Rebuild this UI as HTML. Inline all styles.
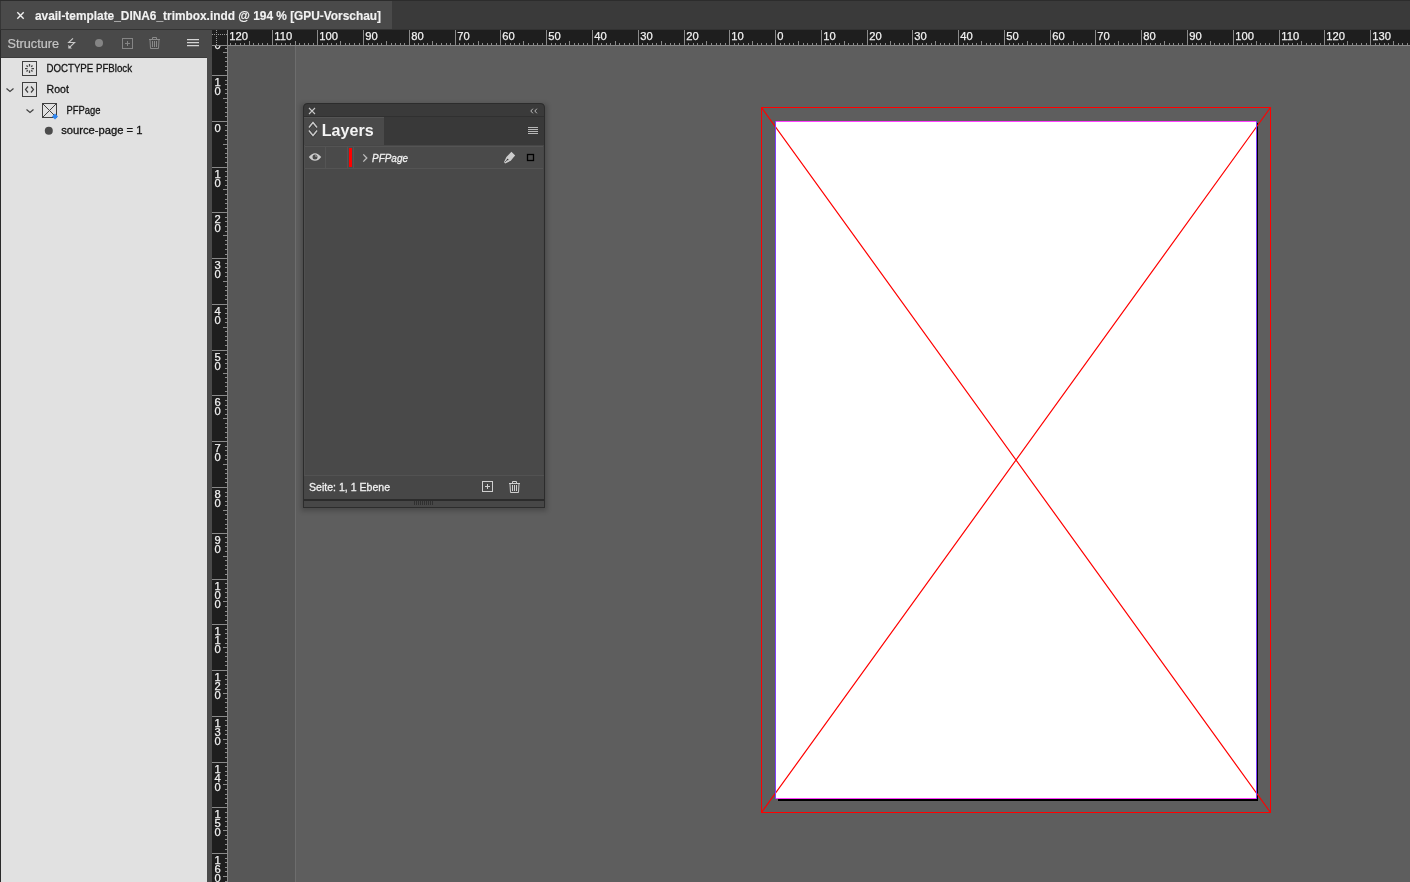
<!DOCTYPE html>
<html><head><meta charset="utf-8"><style>html,body{margin:0;padding:0;width:1410px;height:882px;overflow:hidden;background:#5e5e5e}
text{font-family:"Liberation Sans",sans-serif}</style></head>
<body><svg width="1410" height="882" viewBox="0 0 1410 882" style="display:block;will-change:transform" font-family="Liberation Sans, sans-serif">
<defs><filter id="shadow" x="-10%" y="-10%" width="120%" height="120%"><feGaussianBlur stdDeviation="2.5"/></filter><clipPath id="vclip"><rect x="212" y="46" width="16" height="836"/></clipPath></defs>
<rect x="0" y="0" width="1410" height="882" fill="#5e5e5e" />
<rect x="228" y="46" width="67" height="836" fill="#575757" />
<rect x="295" y="46" width="1" height="836" fill="#6d6d6d" />
<rect x="0" y="0" width="1410" height="29" fill="#3a3a3a" />
<rect x="0" y="0" width="1410" height="1" fill="#2c2c2c" />
<rect x="0" y="1" width="392" height="28" fill="#4a4a4a" />
<rect x="0" y="29" width="1410" height="1" fill="#323232" />
<rect x="0" y="1" width="1" height="28" fill="#363636" />
<path d="M17.3 12.3 L23.7 18.7 M23.7 12.3 L17.3 18.7" stroke="#f0f0f0" stroke-width="1.4" fill="none"/>
<text x="35" y="19.6" font-size="12.2" fill="#f2f2f2" font-weight="bold" font-style="normal" textLength="346" lengthAdjust="spacingAndGlyphs" stroke="#f2f2f2" stroke-width="0.15">avail-template_DINA6_trimbox.indd @ 194 % [GPU-Vorschau]</text>
<rect x="0" y="30" width="212" height="852" fill="#4a4a4a" />
<rect x="0" y="30" width="212" height="27" fill="#494949" />
<rect x="0" y="57" width="207" height="1" fill="#3c3c3c" />
<rect x="1" y="58" width="206" height="824" fill="#e1e1e1" />
<rect x="0" y="30" width="1" height="852" fill="#2a2a2a" />
<text x="7.5" y="47.6" font-size="12" fill="#c4c4c4" font-weight="normal" font-style="normal" textLength="51.5" lengthAdjust="spacingAndGlyphs"  stroke="#c4c4c4" stroke-width="0.2">Structure</text>
<path d="M73 38.3 L68.6 42.5 H74.6 L69.8 47.2" stroke="#c8c8c8" stroke-width="1.1" fill="none"/>
<path d="M68.3 48.4 L68.3 44.8 L71.9 48.4 Z" fill="#c8c8c8"/>
<circle cx="99" cy="43" r="4" fill="#858585"/>
<rect x="122.5" y="38.5" width="10" height="10" stroke="#858585" fill="none" stroke-width="1"/>
<path d="M127.5 41 V46 M125 43.5 H130" stroke="#858585" stroke-width="1"/>
<path d="M149 39.5 H160 M150 39.5 L150.5 48.5 H158.5 L159 39.5 M152.5 39.3 V37.5 H156.5 V39.3 M152.5 41 V47 M154.5 41 V47 M156.5 41 V47" stroke="#8a8a8a" stroke-width="1" fill="none"/>
<path d="M187 39.5 H199 M187 42.5 H199 M187 45.5 H199" stroke="#d4d4d4" stroke-width="1.25" fill="none"/>
<rect x="22.5" y="61.5" width="14" height="14" stroke="#404040" fill="none"/>
<path d="M29.5 64 V66.5 M29.5 70.5 V73 M25 68.5 H27.5 M31.5 68.5 H34 M26.5 65.5 L27.8 66.8 M32.5 65.5 L31.2 66.8 M26.5 71.5 L27.8 70.2 M32.5 71.5 L31.2 70.2" stroke="#404040" stroke-width="1.25" fill="none"/>
<text x="46.5" y="72" font-size="11" fill="#141414" font-weight="normal" font-style="normal" textLength="85.5" lengthAdjust="spacingAndGlyphs"  stroke="#141414" stroke-width="0.3">DOCTYPE PFBlock</text>
<path d="M6.5 88.5 L10 91.5 L13.5 88.5" stroke="#404040" stroke-width="1.2" fill="none"/>
<rect x="22.5" y="82.5" width="14" height="14" stroke="#404040" fill="none"/>
<path d="M28 86.5 L25.5 89.5 L28 92.5 M31 86.5 L33.5 89.5 L31 92.5" stroke="#404040" stroke-width="1.2" fill="none"/>
<text x="46.6" y="93" font-size="11" fill="#141414" font-weight="normal" font-style="normal" textLength="22.3" lengthAdjust="spacingAndGlyphs"  stroke="#141414" stroke-width="0.3">Root</text>
<path d="M26.5 109.5 L30 112.5 L33.5 109.5" stroke="#404040" stroke-width="1.2" fill="none"/>
<rect x="42.5" y="103.5" width="14" height="14" stroke="#404040" fill="none"/>
<path d="M42.5 103.5 L56.5 117.5 M56.5 103.5 L42.5 117.5" stroke="#404040" stroke-width="1" fill="none"/>
<path d="M55 113.5 L58 116.5 L55 119.5 L52 116.5 Z" fill="#2f86f0"/>
<text x="66.5" y="114" font-size="11" fill="#141414" font-weight="normal" font-style="normal" textLength="34" lengthAdjust="spacingAndGlyphs"  stroke="#141414" stroke-width="0.3">PFPage</text>
<circle cx="48.8" cy="130.8" r="4" fill="#4c4c4c"/>
<text x="61.2" y="134" font-size="11" fill="#141414" font-weight="normal" font-style="normal" textLength="81.3" lengthAdjust="spacingAndGlyphs"  stroke="#141414" stroke-width="0.3">source-page = 1</text>
<rect x="212" y="30" width="1198" height="16" fill="#1e1e1e" />
<rect x="212" y="30" width="16" height="852" fill="#1e1e1e" />
<rect x="212" y="45" width="1198" height="1" fill="#8a8a8a" />
<rect x="227" y="30" width="1" height="852" fill="#8a8a8a" />
<rect x="216" y="30" width="1" height="1" fill="#9a9a9a" />
<rect x="216" y="32" width="1" height="1" fill="#9a9a9a" />
<rect x="216" y="34" width="1" height="1" fill="#9a9a9a" />
<rect x="216" y="36" width="1" height="1" fill="#9a9a9a" />
<rect x="216" y="38" width="1" height="1" fill="#9a9a9a" />
<rect x="216" y="40" width="1" height="1" fill="#9a9a9a" />
<rect x="216" y="42" width="1" height="1" fill="#9a9a9a" />
<rect x="216" y="44" width="1" height="1" fill="#9a9a9a" />
<rect x="212" y="34" width="1" height="1" fill="#9a9a9a" />
<rect x="214" y="34" width="1" height="1" fill="#9a9a9a" />
<rect x="216" y="34" width="1" height="1" fill="#9a9a9a" />
<rect x="218" y="34" width="1" height="1" fill="#9a9a9a" />
<rect x="220" y="34" width="1" height="1" fill="#9a9a9a" />
<rect x="222" y="34" width="1" height="1" fill="#9a9a9a" />
<rect x="224" y="34" width="1" height="1" fill="#9a9a9a" />
<rect x="226" y="34" width="1" height="1" fill="#9a9a9a" />
<rect x="227" y="30" width="1" height="15" fill="#8a8a8a" />
<text x="229.3" y="40.3" font-size="11.2" fill="#f0f0f0" stroke="#f0f0f0" stroke-width="0.25">120</text>
<rect x="230" y="43" width="1" height="2" fill="#8a8a8a" />
<rect x="235" y="43" width="1" height="2" fill="#8a8a8a" />
<rect x="240" y="43" width="1" height="2" fill="#8a8a8a" />
<rect x="244" y="43" width="1" height="2" fill="#8a8a8a" />
<rect x="249" y="41" width="1" height="4" fill="#8a8a8a" />
<rect x="253" y="43" width="1" height="2" fill="#8a8a8a" />
<rect x="258" y="43" width="1" height="2" fill="#8a8a8a" />
<rect x="262" y="43" width="1" height="2" fill="#8a8a8a" />
<rect x="267" y="43" width="1" height="2" fill="#8a8a8a" />
<rect x="272" y="30" width="1" height="15" fill="#8a8a8a" />
<text x="274.3" y="40.3" font-size="11.2" fill="#f0f0f0" stroke="#f0f0f0" stroke-width="0.25">110</text>
<rect x="276" y="43" width="1" height="2" fill="#8a8a8a" />
<rect x="281" y="43" width="1" height="2" fill="#8a8a8a" />
<rect x="285" y="43" width="1" height="2" fill="#8a8a8a" />
<rect x="290" y="43" width="1" height="2" fill="#8a8a8a" />
<rect x="295" y="41" width="1" height="4" fill="#8a8a8a" />
<rect x="299" y="43" width="1" height="2" fill="#8a8a8a" />
<rect x="304" y="43" width="1" height="2" fill="#8a8a8a" />
<rect x="308" y="43" width="1" height="2" fill="#8a8a8a" />
<rect x="313" y="43" width="1" height="2" fill="#8a8a8a" />
<rect x="317" y="30" width="1" height="15" fill="#8a8a8a" />
<text x="319.3" y="40.3" font-size="11.2" fill="#f0f0f0" stroke="#f0f0f0" stroke-width="0.25">100</text>
<rect x="322" y="43" width="1" height="2" fill="#8a8a8a" />
<rect x="327" y="43" width="1" height="2" fill="#8a8a8a" />
<rect x="331" y="43" width="1" height="2" fill="#8a8a8a" />
<rect x="336" y="43" width="1" height="2" fill="#8a8a8a" />
<rect x="340" y="41" width="1" height="4" fill="#8a8a8a" />
<rect x="345" y="43" width="1" height="2" fill="#8a8a8a" />
<rect x="349" y="43" width="1" height="2" fill="#8a8a8a" />
<rect x="354" y="43" width="1" height="2" fill="#8a8a8a" />
<rect x="359" y="43" width="1" height="2" fill="#8a8a8a" />
<rect x="363" y="30" width="1" height="15" fill="#8a8a8a" />
<text x="365.3" y="40.3" font-size="11.2" fill="#f0f0f0" stroke="#f0f0f0" stroke-width="0.25">90</text>
<rect x="368" y="43" width="1" height="2" fill="#8a8a8a" />
<rect x="372" y="43" width="1" height="2" fill="#8a8a8a" />
<rect x="377" y="43" width="1" height="2" fill="#8a8a8a" />
<rect x="381" y="43" width="1" height="2" fill="#8a8a8a" />
<rect x="386" y="41" width="1" height="4" fill="#8a8a8a" />
<rect x="391" y="43" width="1" height="2" fill="#8a8a8a" />
<rect x="395" y="43" width="1" height="2" fill="#8a8a8a" />
<rect x="400" y="43" width="1" height="2" fill="#8a8a8a" />
<rect x="404" y="43" width="1" height="2" fill="#8a8a8a" />
<rect x="409" y="30" width="1" height="15" fill="#8a8a8a" />
<text x="411.3" y="40.3" font-size="11.2" fill="#f0f0f0" stroke="#f0f0f0" stroke-width="0.25">80</text>
<rect x="414" y="43" width="1" height="2" fill="#8a8a8a" />
<rect x="418" y="43" width="1" height="2" fill="#8a8a8a" />
<rect x="423" y="43" width="1" height="2" fill="#8a8a8a" />
<rect x="427" y="43" width="1" height="2" fill="#8a8a8a" />
<rect x="432" y="41" width="1" height="4" fill="#8a8a8a" />
<rect x="436" y="43" width="1" height="2" fill="#8a8a8a" />
<rect x="441" y="43" width="1" height="2" fill="#8a8a8a" />
<rect x="446" y="43" width="1" height="2" fill="#8a8a8a" />
<rect x="450" y="43" width="1" height="2" fill="#8a8a8a" />
<rect x="455" y="30" width="1" height="15" fill="#8a8a8a" />
<text x="457.3" y="40.3" font-size="11.2" fill="#f0f0f0" stroke="#f0f0f0" stroke-width="0.25">70</text>
<rect x="459" y="43" width="1" height="2" fill="#8a8a8a" />
<rect x="464" y="43" width="1" height="2" fill="#8a8a8a" />
<rect x="468" y="43" width="1" height="2" fill="#8a8a8a" />
<rect x="473" y="43" width="1" height="2" fill="#8a8a8a" />
<rect x="478" y="41" width="1" height="4" fill="#8a8a8a" />
<rect x="482" y="43" width="1" height="2" fill="#8a8a8a" />
<rect x="487" y="43" width="1" height="2" fill="#8a8a8a" />
<rect x="491" y="43" width="1" height="2" fill="#8a8a8a" />
<rect x="496" y="43" width="1" height="2" fill="#8a8a8a" />
<rect x="500" y="30" width="1" height="15" fill="#8a8a8a" />
<text x="502.3" y="40.3" font-size="11.2" fill="#f0f0f0" stroke="#f0f0f0" stroke-width="0.25">60</text>
<rect x="505" y="43" width="1" height="2" fill="#8a8a8a" />
<rect x="510" y="43" width="1" height="2" fill="#8a8a8a" />
<rect x="514" y="43" width="1" height="2" fill="#8a8a8a" />
<rect x="519" y="43" width="1" height="2" fill="#8a8a8a" />
<rect x="523" y="41" width="1" height="4" fill="#8a8a8a" />
<rect x="528" y="43" width="1" height="2" fill="#8a8a8a" />
<rect x="533" y="43" width="1" height="2" fill="#8a8a8a" />
<rect x="537" y="43" width="1" height="2" fill="#8a8a8a" />
<rect x="542" y="43" width="1" height="2" fill="#8a8a8a" />
<rect x="546" y="30" width="1" height="15" fill="#8a8a8a" />
<text x="548.3" y="40.3" font-size="11.2" fill="#f0f0f0" stroke="#f0f0f0" stroke-width="0.25">50</text>
<rect x="551" y="43" width="1" height="2" fill="#8a8a8a" />
<rect x="555" y="43" width="1" height="2" fill="#8a8a8a" />
<rect x="560" y="43" width="1" height="2" fill="#8a8a8a" />
<rect x="565" y="43" width="1" height="2" fill="#8a8a8a" />
<rect x="569" y="41" width="1" height="4" fill="#8a8a8a" />
<rect x="574" y="43" width="1" height="2" fill="#8a8a8a" />
<rect x="578" y="43" width="1" height="2" fill="#8a8a8a" />
<rect x="583" y="43" width="1" height="2" fill="#8a8a8a" />
<rect x="587" y="43" width="1" height="2" fill="#8a8a8a" />
<rect x="592" y="30" width="1" height="15" fill="#8a8a8a" />
<text x="594.3" y="40.3" font-size="11.2" fill="#f0f0f0" stroke="#f0f0f0" stroke-width="0.25">40</text>
<rect x="597" y="43" width="1" height="2" fill="#8a8a8a" />
<rect x="601" y="43" width="1" height="2" fill="#8a8a8a" />
<rect x="606" y="43" width="1" height="2" fill="#8a8a8a" />
<rect x="610" y="43" width="1" height="2" fill="#8a8a8a" />
<rect x="615" y="41" width="1" height="4" fill="#8a8a8a" />
<rect x="619" y="43" width="1" height="2" fill="#8a8a8a" />
<rect x="624" y="43" width="1" height="2" fill="#8a8a8a" />
<rect x="629" y="43" width="1" height="2" fill="#8a8a8a" />
<rect x="633" y="43" width="1" height="2" fill="#8a8a8a" />
<rect x="638" y="30" width="1" height="15" fill="#8a8a8a" />
<text x="640.3" y="40.3" font-size="11.2" fill="#f0f0f0" stroke="#f0f0f0" stroke-width="0.25">30</text>
<rect x="642" y="43" width="1" height="2" fill="#8a8a8a" />
<rect x="647" y="43" width="1" height="2" fill="#8a8a8a" />
<rect x="652" y="43" width="1" height="2" fill="#8a8a8a" />
<rect x="656" y="43" width="1" height="2" fill="#8a8a8a" />
<rect x="661" y="41" width="1" height="4" fill="#8a8a8a" />
<rect x="665" y="43" width="1" height="2" fill="#8a8a8a" />
<rect x="670" y="43" width="1" height="2" fill="#8a8a8a" />
<rect x="674" y="43" width="1" height="2" fill="#8a8a8a" />
<rect x="679" y="43" width="1" height="2" fill="#8a8a8a" />
<rect x="684" y="30" width="1" height="15" fill="#8a8a8a" />
<text x="686.3" y="40.3" font-size="11.2" fill="#f0f0f0" stroke="#f0f0f0" stroke-width="0.25">20</text>
<rect x="688" y="43" width="1" height="2" fill="#8a8a8a" />
<rect x="693" y="43" width="1" height="2" fill="#8a8a8a" />
<rect x="697" y="43" width="1" height="2" fill="#8a8a8a" />
<rect x="702" y="43" width="1" height="2" fill="#8a8a8a" />
<rect x="706" y="41" width="1" height="4" fill="#8a8a8a" />
<rect x="711" y="43" width="1" height="2" fill="#8a8a8a" />
<rect x="716" y="43" width="1" height="2" fill="#8a8a8a" />
<rect x="720" y="43" width="1" height="2" fill="#8a8a8a" />
<rect x="725" y="43" width="1" height="2" fill="#8a8a8a" />
<rect x="729" y="30" width="1" height="15" fill="#8a8a8a" />
<text x="731.3" y="40.3" font-size="11.2" fill="#f0f0f0" stroke="#f0f0f0" stroke-width="0.25">10</text>
<rect x="734" y="43" width="1" height="2" fill="#8a8a8a" />
<rect x="738" y="43" width="1" height="2" fill="#8a8a8a" />
<rect x="743" y="43" width="1" height="2" fill="#8a8a8a" />
<rect x="748" y="43" width="1" height="2" fill="#8a8a8a" />
<rect x="752" y="41" width="1" height="4" fill="#8a8a8a" />
<rect x="757" y="43" width="1" height="2" fill="#8a8a8a" />
<rect x="761" y="43" width="1" height="2" fill="#8a8a8a" />
<rect x="766" y="43" width="1" height="2" fill="#8a8a8a" />
<rect x="771" y="43" width="1" height="2" fill="#8a8a8a" />
<rect x="775" y="30" width="1" height="15" fill="#8a8a8a" />
<text x="777.3" y="40.3" font-size="11.2" fill="#f0f0f0" stroke="#f0f0f0" stroke-width="0.25">0</text>
<rect x="780" y="43" width="1" height="2" fill="#8a8a8a" />
<rect x="784" y="43" width="1" height="2" fill="#8a8a8a" />
<rect x="789" y="43" width="1" height="2" fill="#8a8a8a" />
<rect x="793" y="43" width="1" height="2" fill="#8a8a8a" />
<rect x="798" y="41" width="1" height="4" fill="#8a8a8a" />
<rect x="803" y="43" width="1" height="2" fill="#8a8a8a" />
<rect x="807" y="43" width="1" height="2" fill="#8a8a8a" />
<rect x="812" y="43" width="1" height="2" fill="#8a8a8a" />
<rect x="816" y="43" width="1" height="2" fill="#8a8a8a" />
<rect x="821" y="30" width="1" height="15" fill="#8a8a8a" />
<text x="823.3" y="40.3" font-size="11.2" fill="#f0f0f0" stroke="#f0f0f0" stroke-width="0.25">10</text>
<rect x="825" y="43" width="1" height="2" fill="#8a8a8a" />
<rect x="830" y="43" width="1" height="2" fill="#8a8a8a" />
<rect x="835" y="43" width="1" height="2" fill="#8a8a8a" />
<rect x="839" y="43" width="1" height="2" fill="#8a8a8a" />
<rect x="844" y="41" width="1" height="4" fill="#8a8a8a" />
<rect x="848" y="43" width="1" height="2" fill="#8a8a8a" />
<rect x="853" y="43" width="1" height="2" fill="#8a8a8a" />
<rect x="857" y="43" width="1" height="2" fill="#8a8a8a" />
<rect x="862" y="43" width="1" height="2" fill="#8a8a8a" />
<rect x="867" y="30" width="1" height="15" fill="#8a8a8a" />
<text x="869.3" y="40.3" font-size="11.2" fill="#f0f0f0" stroke="#f0f0f0" stroke-width="0.25">20</text>
<rect x="871" y="43" width="1" height="2" fill="#8a8a8a" />
<rect x="876" y="43" width="1" height="2" fill="#8a8a8a" />
<rect x="880" y="43" width="1" height="2" fill="#8a8a8a" />
<rect x="885" y="43" width="1" height="2" fill="#8a8a8a" />
<rect x="890" y="41" width="1" height="4" fill="#8a8a8a" />
<rect x="894" y="43" width="1" height="2" fill="#8a8a8a" />
<rect x="899" y="43" width="1" height="2" fill="#8a8a8a" />
<rect x="903" y="43" width="1" height="2" fill="#8a8a8a" />
<rect x="908" y="43" width="1" height="2" fill="#8a8a8a" />
<rect x="912" y="30" width="1" height="15" fill="#8a8a8a" />
<text x="914.3" y="40.3" font-size="11.2" fill="#f0f0f0" stroke="#f0f0f0" stroke-width="0.25">30</text>
<rect x="917" y="43" width="1" height="2" fill="#8a8a8a" />
<rect x="922" y="43" width="1" height="2" fill="#8a8a8a" />
<rect x="926" y="43" width="1" height="2" fill="#8a8a8a" />
<rect x="931" y="43" width="1" height="2" fill="#8a8a8a" />
<rect x="935" y="41" width="1" height="4" fill="#8a8a8a" />
<rect x="940" y="43" width="1" height="2" fill="#8a8a8a" />
<rect x="944" y="43" width="1" height="2" fill="#8a8a8a" />
<rect x="949" y="43" width="1" height="2" fill="#8a8a8a" />
<rect x="954" y="43" width="1" height="2" fill="#8a8a8a" />
<rect x="958" y="30" width="1" height="15" fill="#8a8a8a" />
<text x="960.3" y="40.3" font-size="11.2" fill="#f0f0f0" stroke="#f0f0f0" stroke-width="0.25">40</text>
<rect x="963" y="43" width="1" height="2" fill="#8a8a8a" />
<rect x="967" y="43" width="1" height="2" fill="#8a8a8a" />
<rect x="972" y="43" width="1" height="2" fill="#8a8a8a" />
<rect x="976" y="43" width="1" height="2" fill="#8a8a8a" />
<rect x="981" y="41" width="1" height="4" fill="#8a8a8a" />
<rect x="986" y="43" width="1" height="2" fill="#8a8a8a" />
<rect x="990" y="43" width="1" height="2" fill="#8a8a8a" />
<rect x="995" y="43" width="1" height="2" fill="#8a8a8a" />
<rect x="999" y="43" width="1" height="2" fill="#8a8a8a" />
<rect x="1004" y="30" width="1" height="15" fill="#8a8a8a" />
<text x="1006.3" y="40.3" font-size="11.2" fill="#f0f0f0" stroke="#f0f0f0" stroke-width="0.25">50</text>
<rect x="1009" y="43" width="1" height="2" fill="#8a8a8a" />
<rect x="1013" y="43" width="1" height="2" fill="#8a8a8a" />
<rect x="1018" y="43" width="1" height="2" fill="#8a8a8a" />
<rect x="1022" y="43" width="1" height="2" fill="#8a8a8a" />
<rect x="1027" y="41" width="1" height="4" fill="#8a8a8a" />
<rect x="1031" y="43" width="1" height="2" fill="#8a8a8a" />
<rect x="1036" y="43" width="1" height="2" fill="#8a8a8a" />
<rect x="1041" y="43" width="1" height="2" fill="#8a8a8a" />
<rect x="1045" y="43" width="1" height="2" fill="#8a8a8a" />
<rect x="1050" y="30" width="1" height="15" fill="#8a8a8a" />
<text x="1052.3" y="40.3" font-size="11.2" fill="#f0f0f0" stroke="#f0f0f0" stroke-width="0.25">60</text>
<rect x="1054" y="43" width="1" height="2" fill="#8a8a8a" />
<rect x="1059" y="43" width="1" height="2" fill="#8a8a8a" />
<rect x="1063" y="43" width="1" height="2" fill="#8a8a8a" />
<rect x="1068" y="43" width="1" height="2" fill="#8a8a8a" />
<rect x="1073" y="41" width="1" height="4" fill="#8a8a8a" />
<rect x="1077" y="43" width="1" height="2" fill="#8a8a8a" />
<rect x="1082" y="43" width="1" height="2" fill="#8a8a8a" />
<rect x="1086" y="43" width="1" height="2" fill="#8a8a8a" />
<rect x="1091" y="43" width="1" height="2" fill="#8a8a8a" />
<rect x="1095" y="30" width="1" height="15" fill="#8a8a8a" />
<text x="1097.3" y="40.3" font-size="11.2" fill="#f0f0f0" stroke="#f0f0f0" stroke-width="0.25">70</text>
<rect x="1100" y="43" width="1" height="2" fill="#8a8a8a" />
<rect x="1105" y="43" width="1" height="2" fill="#8a8a8a" />
<rect x="1109" y="43" width="1" height="2" fill="#8a8a8a" />
<rect x="1114" y="43" width="1" height="2" fill="#8a8a8a" />
<rect x="1118" y="41" width="1" height="4" fill="#8a8a8a" />
<rect x="1123" y="43" width="1" height="2" fill="#8a8a8a" />
<rect x="1128" y="43" width="1" height="2" fill="#8a8a8a" />
<rect x="1132" y="43" width="1" height="2" fill="#8a8a8a" />
<rect x="1137" y="43" width="1" height="2" fill="#8a8a8a" />
<rect x="1141" y="30" width="1" height="15" fill="#8a8a8a" />
<text x="1143.3" y="40.3" font-size="11.2" fill="#f0f0f0" stroke="#f0f0f0" stroke-width="0.25">80</text>
<rect x="1146" y="43" width="1" height="2" fill="#8a8a8a" />
<rect x="1150" y="43" width="1" height="2" fill="#8a8a8a" />
<rect x="1155" y="43" width="1" height="2" fill="#8a8a8a" />
<rect x="1160" y="43" width="1" height="2" fill="#8a8a8a" />
<rect x="1164" y="41" width="1" height="4" fill="#8a8a8a" />
<rect x="1169" y="43" width="1" height="2" fill="#8a8a8a" />
<rect x="1173" y="43" width="1" height="2" fill="#8a8a8a" />
<rect x="1178" y="43" width="1" height="2" fill="#8a8a8a" />
<rect x="1182" y="43" width="1" height="2" fill="#8a8a8a" />
<rect x="1187" y="30" width="1" height="15" fill="#8a8a8a" />
<text x="1189.3" y="40.3" font-size="11.2" fill="#f0f0f0" stroke="#f0f0f0" stroke-width="0.25">90</text>
<rect x="1192" y="43" width="1" height="2" fill="#8a8a8a" />
<rect x="1196" y="43" width="1" height="2" fill="#8a8a8a" />
<rect x="1201" y="43" width="1" height="2" fill="#8a8a8a" />
<rect x="1205" y="43" width="1" height="2" fill="#8a8a8a" />
<rect x="1210" y="41" width="1" height="4" fill="#8a8a8a" />
<rect x="1214" y="43" width="1" height="2" fill="#8a8a8a" />
<rect x="1219" y="43" width="1" height="2" fill="#8a8a8a" />
<rect x="1224" y="43" width="1" height="2" fill="#8a8a8a" />
<rect x="1228" y="43" width="1" height="2" fill="#8a8a8a" />
<rect x="1233" y="30" width="1" height="15" fill="#8a8a8a" />
<text x="1235.3" y="40.3" font-size="11.2" fill="#f0f0f0" stroke="#f0f0f0" stroke-width="0.25">100</text>
<rect x="1237" y="43" width="1" height="2" fill="#8a8a8a" />
<rect x="1242" y="43" width="1" height="2" fill="#8a8a8a" />
<rect x="1247" y="43" width="1" height="2" fill="#8a8a8a" />
<rect x="1251" y="43" width="1" height="2" fill="#8a8a8a" />
<rect x="1256" y="41" width="1" height="4" fill="#8a8a8a" />
<rect x="1260" y="43" width="1" height="2" fill="#8a8a8a" />
<rect x="1265" y="43" width="1" height="2" fill="#8a8a8a" />
<rect x="1269" y="43" width="1" height="2" fill="#8a8a8a" />
<rect x="1274" y="43" width="1" height="2" fill="#8a8a8a" />
<rect x="1279" y="30" width="1" height="15" fill="#8a8a8a" />
<text x="1281.3" y="40.3" font-size="11.2" fill="#f0f0f0" stroke="#f0f0f0" stroke-width="0.25">110</text>
<rect x="1283" y="43" width="1" height="2" fill="#8a8a8a" />
<rect x="1288" y="43" width="1" height="2" fill="#8a8a8a" />
<rect x="1292" y="43" width="1" height="2" fill="#8a8a8a" />
<rect x="1297" y="43" width="1" height="2" fill="#8a8a8a" />
<rect x="1301" y="41" width="1" height="4" fill="#8a8a8a" />
<rect x="1306" y="43" width="1" height="2" fill="#8a8a8a" />
<rect x="1311" y="43" width="1" height="2" fill="#8a8a8a" />
<rect x="1315" y="43" width="1" height="2" fill="#8a8a8a" />
<rect x="1320" y="43" width="1" height="2" fill="#8a8a8a" />
<rect x="1324" y="30" width="1" height="15" fill="#8a8a8a" />
<text x="1326.3" y="40.3" font-size="11.2" fill="#f0f0f0" stroke="#f0f0f0" stroke-width="0.25">120</text>
<rect x="1329" y="43" width="1" height="2" fill="#8a8a8a" />
<rect x="1333" y="43" width="1" height="2" fill="#8a8a8a" />
<rect x="1338" y="43" width="1" height="2" fill="#8a8a8a" />
<rect x="1343" y="43" width="1" height="2" fill="#8a8a8a" />
<rect x="1347" y="41" width="1" height="4" fill="#8a8a8a" />
<rect x="1352" y="43" width="1" height="2" fill="#8a8a8a" />
<rect x="1356" y="43" width="1" height="2" fill="#8a8a8a" />
<rect x="1361" y="43" width="1" height="2" fill="#8a8a8a" />
<rect x="1366" y="43" width="1" height="2" fill="#8a8a8a" />
<rect x="1370" y="30" width="1" height="15" fill="#8a8a8a" />
<text x="1372.3" y="40.3" font-size="11.2" fill="#f0f0f0" stroke="#f0f0f0" stroke-width="0.25">130</text>
<rect x="1375" y="43" width="1" height="2" fill="#8a8a8a" />
<rect x="1379" y="43" width="1" height="2" fill="#8a8a8a" />
<rect x="1384" y="43" width="1" height="2" fill="#8a8a8a" />
<rect x="1388" y="43" width="1" height="2" fill="#8a8a8a" />
<rect x="1393" y="41" width="1" height="4" fill="#8a8a8a" />
<rect x="1398" y="43" width="1" height="2" fill="#8a8a8a" />
<rect x="1402" y="43" width="1" height="2" fill="#8a8a8a" />
<rect x="1407" y="43" width="1" height="2" fill="#8a8a8a" />
<!-- 120 at 226 -->
<g clip-path="url(#vclip)">
<rect x="225" y="2" width="2" height="1" fill="#8a8a8a" />
<rect x="223" y="6" width="4" height="1" fill="#8a8a8a" />
<rect x="225" y="11" width="2" height="1" fill="#8a8a8a" />
<rect x="225" y="16" width="2" height="1" fill="#8a8a8a" />
<rect x="225" y="20" width="2" height="1" fill="#8a8a8a" />
<rect x="225" y="25" width="2" height="1" fill="#8a8a8a" />
<rect x="212" y="29" width="15" height="1" fill="#8a8a8a" />
<text x="214.5" y="39.8" font-size="11.2" fill="#f0f0f0" stroke="#f0f0f0" stroke-width="0.25">2</text>
<text x="214.5" y="49.1" font-size="11.2" fill="#f0f0f0" stroke="#f0f0f0" stroke-width="0.25">0</text>
<rect x="225" y="34" width="2" height="1" fill="#8a8a8a" />
<rect x="225" y="38" width="2" height="1" fill="#8a8a8a" />
<rect x="225" y="43" width="2" height="1" fill="#8a8a8a" />
<rect x="225" y="48" width="2" height="1" fill="#8a8a8a" />
<rect x="223" y="52" width="4" height="1" fill="#8a8a8a" />
<rect x="225" y="57" width="2" height="1" fill="#8a8a8a" />
<rect x="225" y="61" width="2" height="1" fill="#8a8a8a" />
<rect x="225" y="66" width="2" height="1" fill="#8a8a8a" />
<rect x="225" y="70" width="2" height="1" fill="#8a8a8a" />
<rect x="212" y="75" width="15" height="1" fill="#8a8a8a" />
<text x="214.5" y="85.8" font-size="11.2" fill="#f0f0f0" stroke="#f0f0f0" stroke-width="0.25">1</text>
<text x="214.5" y="95.1" font-size="11.2" fill="#f0f0f0" stroke="#f0f0f0" stroke-width="0.25">0</text>
<rect x="225" y="80" width="2" height="1" fill="#8a8a8a" />
<rect x="225" y="84" width="2" height="1" fill="#8a8a8a" />
<rect x="225" y="89" width="2" height="1" fill="#8a8a8a" />
<rect x="225" y="93" width="2" height="1" fill="#8a8a8a" />
<rect x="223" y="98" width="4" height="1" fill="#8a8a8a" />
<rect x="225" y="102" width="2" height="1" fill="#8a8a8a" />
<rect x="225" y="107" width="2" height="1" fill="#8a8a8a" />
<rect x="225" y="112" width="2" height="1" fill="#8a8a8a" />
<rect x="225" y="116" width="2" height="1" fill="#8a8a8a" />
<rect x="212" y="121" width="15" height="1" fill="#8a8a8a" />
<text x="214.5" y="131.8" font-size="11.2" fill="#f0f0f0" stroke="#f0f0f0" stroke-width="0.25">0</text>
<rect x="225" y="125" width="2" height="1" fill="#8a8a8a" />
<rect x="225" y="130" width="2" height="1" fill="#8a8a8a" />
<rect x="225" y="135" width="2" height="1" fill="#8a8a8a" />
<rect x="225" y="139" width="2" height="1" fill="#8a8a8a" />
<rect x="223" y="144" width="4" height="1" fill="#8a8a8a" />
<rect x="225" y="148" width="2" height="1" fill="#8a8a8a" />
<rect x="225" y="153" width="2" height="1" fill="#8a8a8a" />
<rect x="225" y="157" width="2" height="1" fill="#8a8a8a" />
<rect x="225" y="162" width="2" height="1" fill="#8a8a8a" />
<rect x="212" y="167" width="15" height="1" fill="#8a8a8a" />
<text x="214.5" y="177.8" font-size="11.2" fill="#f0f0f0" stroke="#f0f0f0" stroke-width="0.25">1</text>
<text x="214.5" y="187.1" font-size="11.2" fill="#f0f0f0" stroke="#f0f0f0" stroke-width="0.25">0</text>
<rect x="225" y="171" width="2" height="1" fill="#8a8a8a" />
<rect x="225" y="176" width="2" height="1" fill="#8a8a8a" />
<rect x="225" y="180" width="2" height="1" fill="#8a8a8a" />
<rect x="225" y="185" width="2" height="1" fill="#8a8a8a" />
<rect x="223" y="189" width="4" height="1" fill="#8a8a8a" />
<rect x="225" y="194" width="2" height="1" fill="#8a8a8a" />
<rect x="225" y="199" width="2" height="1" fill="#8a8a8a" />
<rect x="225" y="203" width="2" height="1" fill="#8a8a8a" />
<rect x="225" y="208" width="2" height="1" fill="#8a8a8a" />
<rect x="212" y="212" width="15" height="1" fill="#8a8a8a" />
<text x="214.5" y="222.8" font-size="11.2" fill="#f0f0f0" stroke="#f0f0f0" stroke-width="0.25">2</text>
<text x="214.5" y="232.1" font-size="11.2" fill="#f0f0f0" stroke="#f0f0f0" stroke-width="0.25">0</text>
<rect x="225" y="217" width="2" height="1" fill="#8a8a8a" />
<rect x="225" y="221" width="2" height="1" fill="#8a8a8a" />
<rect x="225" y="226" width="2" height="1" fill="#8a8a8a" />
<rect x="225" y="231" width="2" height="1" fill="#8a8a8a" />
<rect x="223" y="235" width="4" height="1" fill="#8a8a8a" />
<rect x="225" y="240" width="2" height="1" fill="#8a8a8a" />
<rect x="225" y="244" width="2" height="1" fill="#8a8a8a" />
<rect x="225" y="249" width="2" height="1" fill="#8a8a8a" />
<rect x="225" y="254" width="2" height="1" fill="#8a8a8a" />
<rect x="212" y="258" width="15" height="1" fill="#8a8a8a" />
<text x="214.5" y="268.8" font-size="11.2" fill="#f0f0f0" stroke="#f0f0f0" stroke-width="0.25">3</text>
<text x="214.5" y="278.1" font-size="11.2" fill="#f0f0f0" stroke="#f0f0f0" stroke-width="0.25">0</text>
<rect x="225" y="263" width="2" height="1" fill="#8a8a8a" />
<rect x="225" y="267" width="2" height="1" fill="#8a8a8a" />
<rect x="225" y="272" width="2" height="1" fill="#8a8a8a" />
<rect x="225" y="276" width="2" height="1" fill="#8a8a8a" />
<rect x="223" y="281" width="4" height="1" fill="#8a8a8a" />
<rect x="225" y="286" width="2" height="1" fill="#8a8a8a" />
<rect x="225" y="290" width="2" height="1" fill="#8a8a8a" />
<rect x="225" y="295" width="2" height="1" fill="#8a8a8a" />
<rect x="225" y="299" width="2" height="1" fill="#8a8a8a" />
<rect x="212" y="304" width="15" height="1" fill="#8a8a8a" />
<text x="214.5" y="314.8" font-size="11.2" fill="#f0f0f0" stroke="#f0f0f0" stroke-width="0.25">4</text>
<text x="214.5" y="324.1" font-size="11.2" fill="#f0f0f0" stroke="#f0f0f0" stroke-width="0.25">0</text>
<rect x="225" y="308" width="2" height="1" fill="#8a8a8a" />
<rect x="225" y="313" width="2" height="1" fill="#8a8a8a" />
<rect x="225" y="318" width="2" height="1" fill="#8a8a8a" />
<rect x="225" y="322" width="2" height="1" fill="#8a8a8a" />
<rect x="223" y="327" width="4" height="1" fill="#8a8a8a" />
<rect x="225" y="331" width="2" height="1" fill="#8a8a8a" />
<rect x="225" y="336" width="2" height="1" fill="#8a8a8a" />
<rect x="225" y="340" width="2" height="1" fill="#8a8a8a" />
<rect x="225" y="345" width="2" height="1" fill="#8a8a8a" />
<rect x="212" y="350" width="15" height="1" fill="#8a8a8a" />
<text x="214.5" y="360.8" font-size="11.2" fill="#f0f0f0" stroke="#f0f0f0" stroke-width="0.25">5</text>
<text x="214.5" y="370.1" font-size="11.2" fill="#f0f0f0" stroke="#f0f0f0" stroke-width="0.25">0</text>
<rect x="225" y="354" width="2" height="1" fill="#8a8a8a" />
<rect x="225" y="359" width="2" height="1" fill="#8a8a8a" />
<rect x="225" y="363" width="2" height="1" fill="#8a8a8a" />
<rect x="225" y="368" width="2" height="1" fill="#8a8a8a" />
<rect x="223" y="373" width="4" height="1" fill="#8a8a8a" />
<rect x="225" y="377" width="2" height="1" fill="#8a8a8a" />
<rect x="225" y="382" width="2" height="1" fill="#8a8a8a" />
<rect x="225" y="386" width="2" height="1" fill="#8a8a8a" />
<rect x="225" y="391" width="2" height="1" fill="#8a8a8a" />
<rect x="212" y="395" width="15" height="1" fill="#8a8a8a" />
<text x="214.5" y="405.8" font-size="11.2" fill="#f0f0f0" stroke="#f0f0f0" stroke-width="0.25">6</text>
<text x="214.5" y="415.1" font-size="11.2" fill="#f0f0f0" stroke="#f0f0f0" stroke-width="0.25">0</text>
<rect x="225" y="400" width="2" height="1" fill="#8a8a8a" />
<rect x="225" y="405" width="2" height="1" fill="#8a8a8a" />
<rect x="225" y="409" width="2" height="1" fill="#8a8a8a" />
<rect x="225" y="414" width="2" height="1" fill="#8a8a8a" />
<rect x="223" y="418" width="4" height="1" fill="#8a8a8a" />
<rect x="225" y="423" width="2" height="1" fill="#8a8a8a" />
<rect x="225" y="427" width="2" height="1" fill="#8a8a8a" />
<rect x="225" y="432" width="2" height="1" fill="#8a8a8a" />
<rect x="225" y="437" width="2" height="1" fill="#8a8a8a" />
<rect x="212" y="441" width="15" height="1" fill="#8a8a8a" />
<text x="214.5" y="451.8" font-size="11.2" fill="#f0f0f0" stroke="#f0f0f0" stroke-width="0.25">7</text>
<text x="214.5" y="461.1" font-size="11.2" fill="#f0f0f0" stroke="#f0f0f0" stroke-width="0.25">0</text>
<rect x="225" y="446" width="2" height="1" fill="#8a8a8a" />
<rect x="225" y="450" width="2" height="1" fill="#8a8a8a" />
<rect x="225" y="455" width="2" height="1" fill="#8a8a8a" />
<rect x="225" y="459" width="2" height="1" fill="#8a8a8a" />
<rect x="223" y="464" width="4" height="1" fill="#8a8a8a" />
<rect x="225" y="469" width="2" height="1" fill="#8a8a8a" />
<rect x="225" y="473" width="2" height="1" fill="#8a8a8a" />
<rect x="225" y="478" width="2" height="1" fill="#8a8a8a" />
<rect x="225" y="482" width="2" height="1" fill="#8a8a8a" />
<rect x="212" y="487" width="15" height="1" fill="#8a8a8a" />
<text x="214.5" y="497.8" font-size="11.2" fill="#f0f0f0" stroke="#f0f0f0" stroke-width="0.25">8</text>
<text x="214.5" y="507.1" font-size="11.2" fill="#f0f0f0" stroke="#f0f0f0" stroke-width="0.25">0</text>
<rect x="225" y="492" width="2" height="1" fill="#8a8a8a" />
<rect x="225" y="496" width="2" height="1" fill="#8a8a8a" />
<rect x="225" y="501" width="2" height="1" fill="#8a8a8a" />
<rect x="225" y="505" width="2" height="1" fill="#8a8a8a" />
<rect x="223" y="510" width="4" height="1" fill="#8a8a8a" />
<rect x="225" y="514" width="2" height="1" fill="#8a8a8a" />
<rect x="225" y="519" width="2" height="1" fill="#8a8a8a" />
<rect x="225" y="524" width="2" height="1" fill="#8a8a8a" />
<rect x="225" y="528" width="2" height="1" fill="#8a8a8a" />
<rect x="212" y="533" width="15" height="1" fill="#8a8a8a" />
<text x="214.5" y="543.8" font-size="11.2" fill="#f0f0f0" stroke="#f0f0f0" stroke-width="0.25">9</text>
<text x="214.5" y="553.1" font-size="11.2" fill="#f0f0f0" stroke="#f0f0f0" stroke-width="0.25">0</text>
<rect x="225" y="537" width="2" height="1" fill="#8a8a8a" />
<rect x="225" y="542" width="2" height="1" fill="#8a8a8a" />
<rect x="225" y="546" width="2" height="1" fill="#8a8a8a" />
<rect x="225" y="551" width="2" height="1" fill="#8a8a8a" />
<rect x="223" y="556" width="4" height="1" fill="#8a8a8a" />
<rect x="225" y="560" width="2" height="1" fill="#8a8a8a" />
<rect x="225" y="565" width="2" height="1" fill="#8a8a8a" />
<rect x="225" y="569" width="2" height="1" fill="#8a8a8a" />
<rect x="225" y="574" width="2" height="1" fill="#8a8a8a" />
<rect x="212" y="579" width="15" height="1" fill="#8a8a8a" />
<text x="214.5" y="589.8" font-size="11.2" fill="#f0f0f0" stroke="#f0f0f0" stroke-width="0.25">1</text>
<text x="214.5" y="599.1" font-size="11.2" fill="#f0f0f0" stroke="#f0f0f0" stroke-width="0.25">0</text>
<text x="214.5" y="608.4" font-size="11.2" fill="#f0f0f0" stroke="#f0f0f0" stroke-width="0.25">0</text>
<rect x="225" y="583" width="2" height="1" fill="#8a8a8a" />
<rect x="225" y="588" width="2" height="1" fill="#8a8a8a" />
<rect x="225" y="592" width="2" height="1" fill="#8a8a8a" />
<rect x="225" y="597" width="2" height="1" fill="#8a8a8a" />
<rect x="223" y="601" width="4" height="1" fill="#8a8a8a" />
<rect x="225" y="606" width="2" height="1" fill="#8a8a8a" />
<rect x="225" y="611" width="2" height="1" fill="#8a8a8a" />
<rect x="225" y="615" width="2" height="1" fill="#8a8a8a" />
<rect x="225" y="620" width="2" height="1" fill="#8a8a8a" />
<rect x="212" y="624" width="15" height="1" fill="#8a8a8a" />
<text x="214.5" y="634.8" font-size="11.2" fill="#f0f0f0" stroke="#f0f0f0" stroke-width="0.25">1</text>
<text x="214.5" y="644.1" font-size="11.2" fill="#f0f0f0" stroke="#f0f0f0" stroke-width="0.25">1</text>
<text x="214.5" y="653.4" font-size="11.2" fill="#f0f0f0" stroke="#f0f0f0" stroke-width="0.25">0</text>
<rect x="225" y="629" width="2" height="1" fill="#8a8a8a" />
<rect x="225" y="633" width="2" height="1" fill="#8a8a8a" />
<rect x="225" y="638" width="2" height="1" fill="#8a8a8a" />
<rect x="225" y="643" width="2" height="1" fill="#8a8a8a" />
<rect x="223" y="647" width="4" height="1" fill="#8a8a8a" />
<rect x="225" y="652" width="2" height="1" fill="#8a8a8a" />
<rect x="225" y="656" width="2" height="1" fill="#8a8a8a" />
<rect x="225" y="661" width="2" height="1" fill="#8a8a8a" />
<rect x="225" y="665" width="2" height="1" fill="#8a8a8a" />
<rect x="212" y="670" width="15" height="1" fill="#8a8a8a" />
<text x="214.5" y="680.8" font-size="11.2" fill="#f0f0f0" stroke="#f0f0f0" stroke-width="0.25">1</text>
<text x="214.5" y="690.1" font-size="11.2" fill="#f0f0f0" stroke="#f0f0f0" stroke-width="0.25">2</text>
<text x="214.5" y="699.4" font-size="11.2" fill="#f0f0f0" stroke="#f0f0f0" stroke-width="0.25">0</text>
<rect x="225" y="675" width="2" height="1" fill="#8a8a8a" />
<rect x="225" y="679" width="2" height="1" fill="#8a8a8a" />
<rect x="225" y="684" width="2" height="1" fill="#8a8a8a" />
<rect x="225" y="688" width="2" height="1" fill="#8a8a8a" />
<rect x="223" y="693" width="4" height="1" fill="#8a8a8a" />
<rect x="225" y="698" width="2" height="1" fill="#8a8a8a" />
<rect x="225" y="702" width="2" height="1" fill="#8a8a8a" />
<rect x="225" y="707" width="2" height="1" fill="#8a8a8a" />
<rect x="225" y="711" width="2" height="1" fill="#8a8a8a" />
<rect x="212" y="716" width="15" height="1" fill="#8a8a8a" />
<text x="214.5" y="726.8" font-size="11.2" fill="#f0f0f0" stroke="#f0f0f0" stroke-width="0.25">1</text>
<text x="214.5" y="736.1" font-size="11.2" fill="#f0f0f0" stroke="#f0f0f0" stroke-width="0.25">3</text>
<text x="214.5" y="745.4" font-size="11.2" fill="#f0f0f0" stroke="#f0f0f0" stroke-width="0.25">0</text>
<rect x="225" y="720" width="2" height="1" fill="#8a8a8a" />
<rect x="225" y="725" width="2" height="1" fill="#8a8a8a" />
<rect x="225" y="730" width="2" height="1" fill="#8a8a8a" />
<rect x="225" y="734" width="2" height="1" fill="#8a8a8a" />
<rect x="223" y="739" width="4" height="1" fill="#8a8a8a" />
<rect x="225" y="743" width="2" height="1" fill="#8a8a8a" />
<rect x="225" y="748" width="2" height="1" fill="#8a8a8a" />
<rect x="225" y="752" width="2" height="1" fill="#8a8a8a" />
<rect x="225" y="757" width="2" height="1" fill="#8a8a8a" />
<rect x="212" y="762" width="15" height="1" fill="#8a8a8a" />
<text x="214.5" y="772.8" font-size="11.2" fill="#f0f0f0" stroke="#f0f0f0" stroke-width="0.25">1</text>
<text x="214.5" y="782.1" font-size="11.2" fill="#f0f0f0" stroke="#f0f0f0" stroke-width="0.25">4</text>
<text x="214.5" y="791.4" font-size="11.2" fill="#f0f0f0" stroke="#f0f0f0" stroke-width="0.25">0</text>
<rect x="225" y="766" width="2" height="1" fill="#8a8a8a" />
<rect x="225" y="771" width="2" height="1" fill="#8a8a8a" />
<rect x="225" y="775" width="2" height="1" fill="#8a8a8a" />
<rect x="225" y="780" width="2" height="1" fill="#8a8a8a" />
<rect x="223" y="784" width="4" height="1" fill="#8a8a8a" />
<rect x="225" y="789" width="2" height="1" fill="#8a8a8a" />
<rect x="225" y="794" width="2" height="1" fill="#8a8a8a" />
<rect x="225" y="798" width="2" height="1" fill="#8a8a8a" />
<rect x="225" y="803" width="2" height="1" fill="#8a8a8a" />
<rect x="212" y="807" width="15" height="1" fill="#8a8a8a" />
<text x="214.5" y="817.8" font-size="11.2" fill="#f0f0f0" stroke="#f0f0f0" stroke-width="0.25">1</text>
<text x="214.5" y="827.1" font-size="11.2" fill="#f0f0f0" stroke="#f0f0f0" stroke-width="0.25">5</text>
<text x="214.5" y="836.4" font-size="11.2" fill="#f0f0f0" stroke="#f0f0f0" stroke-width="0.25">0</text>
<rect x="225" y="812" width="2" height="1" fill="#8a8a8a" />
<rect x="225" y="817" width="2" height="1" fill="#8a8a8a" />
<rect x="225" y="821" width="2" height="1" fill="#8a8a8a" />
<rect x="225" y="826" width="2" height="1" fill="#8a8a8a" />
<rect x="223" y="830" width="4" height="1" fill="#8a8a8a" />
<rect x="225" y="835" width="2" height="1" fill="#8a8a8a" />
<rect x="225" y="839" width="2" height="1" fill="#8a8a8a" />
<rect x="225" y="844" width="2" height="1" fill="#8a8a8a" />
<rect x="225" y="849" width="2" height="1" fill="#8a8a8a" />
<rect x="212" y="853" width="15" height="1" fill="#8a8a8a" />
<text x="214.5" y="863.8" font-size="11.2" fill="#f0f0f0" stroke="#f0f0f0" stroke-width="0.25">1</text>
<text x="214.5" y="873.1" font-size="11.2" fill="#f0f0f0" stroke="#f0f0f0" stroke-width="0.25">6</text>
<text x="214.5" y="882.4" font-size="11.2" fill="#f0f0f0" stroke="#f0f0f0" stroke-width="0.25">0</text>
<rect x="225" y="858" width="2" height="1" fill="#8a8a8a" />
<rect x="225" y="862" width="2" height="1" fill="#8a8a8a" />
<rect x="225" y="867" width="2" height="1" fill="#8a8a8a" />
<rect x="225" y="871" width="2" height="1" fill="#8a8a8a" />
<rect x="223" y="876" width="4" height="1" fill="#8a8a8a" />
<rect x="225" y="881" width="2" height="1" fill="#8a8a8a" />
</g>
<rect x="761" y="107" width="509" height="705" fill="none" stroke="#ff0000" stroke-width="1" transform="translate(0.5 0.5)"/>
<rect x="775" y="121" width="482" height="678" fill="#ffffff" />
<rect x="1257" y="123" width="1" height="677" fill="#000000" />
<rect x="778" y="799" width="480" height="2" fill="#000000" />
<path d="M761.5 107.5 L1270.5 812.5 M1270.5 107.5 L761.5 812.5" stroke="#ff0000" stroke-width="1.2" fill="none"/>
<rect x="775" y="121" width="482" height="1" fill="#ff40ff" />
<rect x="775" y="798" width="482" height="1" fill="#ff40ff" />
<rect x="775" y="121" width="1" height="678" fill="#8040ff" />
<rect x="1256" y="121" width="1" height="678" fill="#8040ff" />
<rect x="301" y="104" width="246" height="407" fill="#000" opacity="0.22" filter="url(#shadow)"/>
<path d="M303 108 Q303 103 308 103 L540 103 Q545 103 545 108 L545 508 L303 508 Z" fill="#2c2c2c"/>
<path d="M304 108 Q304 104 308 104 L540 104 Q544 104 544 108 L544 116 L304 116 Z" fill="#3a3a3a"/>
<rect x="304" y="116" width="240" height="1" fill="#303030"/>
<rect x="304" y="117" width="240" height="28" fill="#393939"/>
<rect x="304" y="117" width="80" height="28" fill="#4a4a4a"/>
<rect x="304" y="117" width="80" height="1" fill="#555555"/>
<rect x="304" y="145" width="240" height="331" fill="#474747"/>
<rect x="304" y="145" width="1" height="331" fill="#505050"/>
<rect x="305" y="146" width="238" height="23" fill="#4a4a4a"/>
<rect x="305" y="146" width="238" height="1" fill="#545454"/>
<rect x="305" y="168" width="238" height="1" fill="#545454"/>
<rect x="325" y="146" width="1" height="23" fill="#545454"/>
<rect x="347" y="146" width="1" height="23" fill="#545454"/>
<rect x="353" y="146" width="1" height="23" fill="#545454"/>
<rect x="349" y="148" width="3" height="19" fill="#ff0000"/>
<rect x="305" y="169" width="238" height="306" fill="#494949"/>
<rect x="304" y="475" width="240" height="1" fill="#525252"/>
<rect x="304" y="476" width="240" height="23" fill="#474747"/>
<rect x="304" y="499" width="240" height="2" fill="#2b2b2b"/>
<rect x="304" y="501" width="240" height="6" fill="#474747"/>
<rect x="414" y="501" width="1" height="4" fill="#303030"/>
<rect x="416" y="501" width="1" height="4" fill="#303030"/>
<rect x="418" y="501" width="1" height="4" fill="#303030"/>
<rect x="420" y="501" width="1" height="4" fill="#303030"/>
<rect x="422" y="501" width="1" height="4" fill="#303030"/>
<rect x="424" y="501" width="1" height="4" fill="#303030"/>
<rect x="426" y="501" width="1" height="4" fill="#303030"/>
<rect x="428" y="501" width="1" height="4" fill="#303030"/>
<rect x="430" y="501" width="1" height="4" fill="#303030"/>
<rect x="432" y="501" width="1" height="4" fill="#303030"/>
<path d="M309 108 L315 114 M315 108 L309 114" stroke="#c8c8c8" stroke-width="1.1" fill="none"/>
<path d="M532.9 108.7 L530.8 111 L532.9 113.3 M536.9 108.7 L534.8 111 L536.9 113.3" stroke="#c8c8c8" stroke-width="0.9" fill="none"/>
<path d="M308.9 127.6 L313 122.6 L317.1 127.6 M308.9 130.6 L313 135.6 L317.1 130.6" stroke="#1e1e1e" stroke-width="2.8" fill="none" opacity="0.55"/>
<path d="M308.9 127.6 L313 122.6 L317.1 127.6 M308.9 130.6 L313 135.6 L317.1 130.6" stroke="#c8c8c8" stroke-width="1.6" fill="none"/>
<text x="321.8" y="135.6" font-size="16.2" fill="#f4f4f4" font-weight="bold" font-style="normal" textLength="51.8" lengthAdjust="spacingAndGlyphs" >Layers</text>
<path d="M528 127.5 H538 M528 129.5 H538 M528 131.5 H538 M528 133.5 H538" stroke="#d8d8d8" stroke-width="0.8" fill="none"/>
<path d="M308.8 157 Q315 149.3 321.2 157 Q315 164.7 308.8 157 Z" fill="#cdcdcd"/>
<circle cx="315" cy="157" r="2.5" fill="#4a4a4a"/>
<path d="M315.2 156.8 L315.2 154.9 A1.9 1.9 0 0 1 317.1 156.8 Z" fill="#9a9a9a"/>
<path d="M363.3 154.4 L366.8 158 L363.3 161.6" stroke="#bdbdbd" stroke-width="1.3" fill="none"/>
<text x="372" y="161.8" font-size="11.5" fill="#f0f0f0" font-weight="normal" font-style="italic" textLength="36" lengthAdjust="spacingAndGlyphs"  stroke="#f0f0f0" stroke-width="0.3">PFPage</text>
<path d="M511.4 151.8 L515.2 155.6 L513.6 157.2 L510.8 160.8 L505.2 163.4 L503.9 162.3 L506.4 157 L509.8 153.4 Z" fill="#cccccc"/>
<path d="M504.8 162.3 L507.4 159.6" stroke="#3a3a3a" stroke-width="0.7"/><circle cx="507.6" cy="159.5" r="0.85" fill="#3a3a3a"/>
<rect x="527.5" y="154.5" width="6" height="6" stroke="#000" stroke-width="1.3" fill="none"/>
<text x="309" y="491.2" font-size="11.5" fill="#f0f0f0" font-weight="normal" font-style="normal" textLength="81" lengthAdjust="spacingAndGlyphs"  stroke="#f0f0f0" stroke-width="0.3">Seite: 1, 1 Ebene</text>
<rect x="482.5" y="481.5" width="10" height="10" stroke="#cfcfcf" fill="none"/>
<path d="M487.5 484 V489 M485 486.5 H490" stroke="#cfcfcf" stroke-width="1"/>
<path d="M509 483.5 H520 M510 483.5 L510.5 492.5 H518.5 L519 483.5 M512.5 483.3 V481.5 H516.5 V483.3 M512.5 485 V491 M514.5 485 V491 M516.5 485 V491" stroke="#cfcfcf" stroke-width="1" fill="none"/>
</svg></body></html>
